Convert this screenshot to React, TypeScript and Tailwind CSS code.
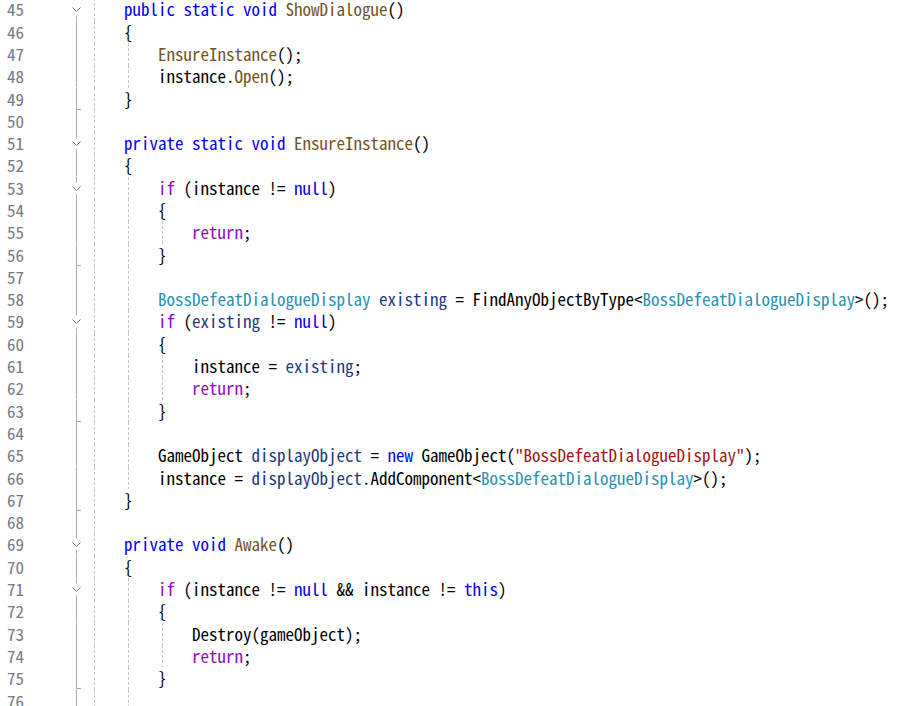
import React from "react";

type Kind = "p" | "k" | "c" | "t" | "m" | "l" | "s";
type Tok = [Kind, string];
type Fold = "chev" | "line" | "end" | "chevFirst";

const color: Record<Kind, string> = {
  p: "text-[#000000]",
  k: "text-[#0000ff]",
  c: "text-[#8f08c4]",
  t: "text-[#2b91af]",
  m: "text-[#74531f]",
  l: "text-[#1f377f]",
  s: "text-[#a31515]",
};

interface Line {
  n: number;
  toks: Tok[];
  fold: Fold;
  guides: number[];
}

const T = "BossDefeatDialogueDisplay";

const lines: Line[] = [
  { n: 45, fold: "chevFirst", guides: [0], toks: [["p", "    "], ["k", "public static void "], ["m", "ShowDialogue"], ["p", "()"]] },
  { n: 46, fold: "line", guides: [0], toks: [["p", "    {"]] },
  { n: 47, fold: "line", guides: [0, 4], toks: [["p", "        "], ["m", "EnsureInstance"], ["p", "();"]] },
  { n: 48, fold: "line", guides: [0, 4], toks: [["p", "        instance."], ["m", "Open"], ["p", "();"]] },
  { n: 49, fold: "end", guides: [0], toks: [["p", "    }"]] },
  { n: 50, fold: "line", guides: [0], toks: [] },
  { n: 51, fold: "chev", guides: [0], toks: [["p", "    "], ["k", "private static void "], ["m", "EnsureInstance"], ["p", "()"]] },
  { n: 52, fold: "line", guides: [0], toks: [["p", "    {"]] },
  { n: 53, fold: "chev", guides: [0, 4], toks: [["p", "        "], ["c", "if"], ["p", " (instance != "], ["k", "null"], ["p", ")"]] },
  { n: 54, fold: "line", guides: [0, 4], toks: [["p", "        {"]] },
  { n: 55, fold: "line", guides: [0, 4, 8], toks: [["p", "            "], ["c", "return"], ["p", ";"]] },
  { n: 56, fold: "end", guides: [0, 4], toks: [["p", "        }"]] },
  { n: 57, fold: "line", guides: [0, 4], toks: [] },
  {
    n: 58,
    fold: "line",
    guides: [0, 4],
    toks: [["p", "        "], ["t", T], ["p", " "], ["l", "existing"], ["p", " = FindAnyObjectByType<"], ["t", T], ["p", ">();"]],
  },
  { n: 59, fold: "chev", guides: [0, 4], toks: [["p", "        "], ["c", "if"], ["p", " ("], ["l", "existing"], ["p", " != "], ["k", "null"], ["p", ")"]] },
  { n: 60, fold: "line", guides: [0, 4], toks: [["p", "        {"]] },
  { n: 61, fold: "line", guides: [0, 4, 8], toks: [["p", "            instance = "], ["l", "existing"], ["p", ";"]] },
  { n: 62, fold: "line", guides: [0, 4, 8], toks: [["p", "            "], ["c", "return"], ["p", ";"]] },
  { n: 63, fold: "end", guides: [0, 4], toks: [["p", "        }"]] },
  { n: 64, fold: "line", guides: [0, 4], toks: [] },
  {
    n: 65,
    fold: "line",
    guides: [0, 4],
    toks: [["p", "        GameObject "], ["l", "displayObject"], ["p", " = "], ["k", "new"], ["p", " GameObject("], ["s", '"BossDefeatDialogueDisplay"'], ["p", ");"]],
  },
  {
    n: 66,
    fold: "line",
    guides: [0, 4],
    toks: [["p", "        instance = "], ["l", "displayObject"], ["p", ".AddComponent<"], ["t", T], ["p", ">();"]],
  },
  { n: 67, fold: "end", guides: [0], toks: [["p", "    }"]] },
  { n: 68, fold: "line", guides: [0], toks: [] },
  { n: 69, fold: "chev", guides: [0], toks: [["p", "    "], ["k", "private void "], ["m", "Awake"], ["p", "()"]] },
  { n: 70, fold: "line", guides: [0], toks: [["p", "    {"]] },
  {
    n: 71,
    fold: "chev",
    guides: [0, 4],
    toks: [["p", "        "], ["c", "if"], ["p", " (instance != "], ["k", "null"], ["p", " && instance != "], ["k", "this"], ["p", ")"]],
  },
  { n: 72, fold: "line", guides: [0, 4], toks: [["p", "        {"]] },
  { n: 73, fold: "line", guides: [0, 4, 8], toks: [["p", "            Destroy(gameObject);"]] },
  { n: 74, fold: "line", guides: [0, 4, 8], toks: [["p", "            "], ["c", "return"], ["p", ";"]] },
  { n: 75, fold: "end", guides: [0, 4], toks: [["p", "        }"]] },
  { n: 76, fold: "line", guides: [0, 4], toks: [] },
];

const H = 22.3;
const CW = 8.5;

function FoldMark({ fold }: { fold: Fold }) {
  const x = 52.5;
  return (
    <svg width="66" height={H} className="block shrink-0" viewBox={`0 0 66 ${H}`}>
      {fold === "line" && <line x1={x} y1={0} x2={x} y2={H} stroke="#a8a8a8" strokeWidth="1" />}
      {fold === "end" && (
        <>
          <line x1={x} y1={0} x2={x} y2={H} stroke="#a8a8a8" strokeWidth="1" />
          <line x1={x} y1={21.5} x2={57} y2={21.5} stroke="#a8a8a8" strokeWidth="1" />
        </>
      )}
      {(fold === "chev" || fold === "chevFirst") && (
        <>
          {fold === "chev" && <line x1={x} y1={0} x2={x} y2={5.5} stroke="#a8a8a8" strokeWidth="1" />}
          <line x1={x} y1={17.5} x2={x} y2={H} stroke="#a8a8a8" strokeWidth="1" />
          <path d="M48.5 9.5 L52.5 13.5 L56.5 9.5" fill="none" stroke="#707070" strokeWidth="1" />
        </>
      )}
    </svg>
  );
}

export default function App() {
  return (
    <div className="h-[706px] w-[910px] overflow-hidden bg-white">
      <div
        className="mt-[-1.7px] text-[17px] [font-family:'Noto_Sans_Mono_CJK_SC','Noto_Sans_Mono_CJK_TC','Liberation_Mono',monospace]"
      >
        {lines.map((ln) => (
          <div key={ln.n} className="flex h-[22.3px] leading-[22.3px]">
            <div className="w-[24px] shrink-0 text-right text-[#737b86]">{ln.n}</div>
            <FoldMark fold={ln.fold} />
            <div className="relative flex-1 whitespace-pre">
              {ln.guides.map((g) => (
                <span
                  key={g}
                  className="absolute top-0 h-full w-px bg-[linear-gradient(to_bottom,#c4c4c4_60%,transparent_60%)] bg-[length:1px_5px]"
                  style={{ left: g * CW + 4 }}
                />
              ))}
              <span className="relative">
                {ln.toks.map((t, i) => (
                  <span key={i} className={color[t[0]]}>
                    {t[1]}
                  </span>
                ))}
              </span>
            </div>
          </div>
        ))}
      </div>
    </div>
  );
}
